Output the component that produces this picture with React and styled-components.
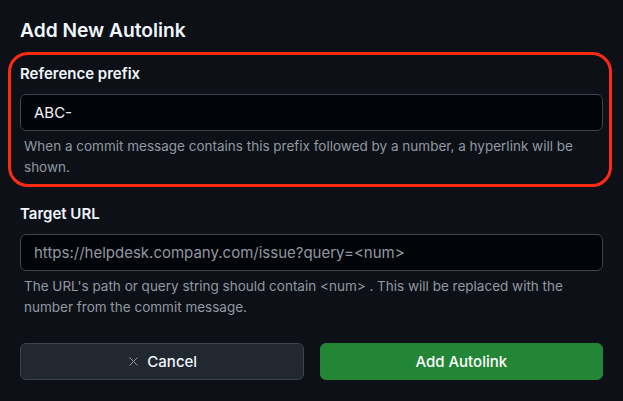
import React from "react";
import styled, { createGlobalStyle } from "styled-components";
import { X } from "lucide-react";

const GlobalStyle = createGlobalStyle`
  body {
    margin: 0;
    background: #0d1117;
    font-family: Inter, "Noto Sans", sans-serif;
    color: #f0f6fc;
  }
`;

const App = () => {
  return (
    <>
      <GlobalStyle />
      <Page>
        <Title>Add New Autolink</Title>

        <Field highlighted>
          <Label htmlFor="prefix">Reference prefix</Label>
          <Input id="prefix" defaultValue="ABC-" />
          <Note>
            When a commit message contains this prefix followed by a number, a
            hyperlink will be shown.
          </Note>
        </Field>

        <Field>
          <Label htmlFor="url">Target URL</Label>
          <Input id="url" placeholder="https://helpdesk.company.com/issue?query=<num>" />
          <Note>
            The URL's path or query string should contain &lt;num&gt; . This will
            be replaced with the number from the commit message.
          </Note>
        </Field>

        <Actions>
          <Button>
            <X size={15} strokeWidth={1.6} color="#9198a1" />
            Cancel
          </Button>
          <Button primary>Add Autolink</Button>
        </Actions>
      </Page>
    </>
  );
};

export default App;

const Page = styled.div`
  padding: 16px 20px 20px;
  display: flex;
  flex-direction: column;
`;

const Title = styled.h2`
  margin: 0 0 20px;
  font-size: 19.2px;
  line-height: 28px;
  font-weight: 600;
`;

const Field = styled.div`
  position: relative;
  display: flex;
  flex-direction: column;
  margin-bottom: 26px;

  &::after {
    content: "";
    display: ${(p) => (p.highlighted ? "block" : "none")};
    position: absolute;
    top: -12px;
    left: -12px;
    right: -9px;
    bottom: -9px;
    border: 3px solid #ff2a12;
    border-radius: 20px;
    pointer-events: none;
  }
`;

const Label = styled.label`
  font-size: 15px;
  line-height: 20px;
  font-weight: 600;
  margin-bottom: 10px;
`;

const Input = styled.input`
  box-sizing: border-box;
  height: 37px;
  width: 100%;
  padding: 0 13px;
  background: #010409;
  border: 1px solid #3d444d;
  border-radius: 6px;
  color: #f0f6fc;
  font-family: inherit;
  font-size: 15px;
  outline: none;

  &::placeholder {
    color: #9198a1;
  }
`;

const Note = styled.p`
  margin: 5px 0 0;
  padding-left: 4px;
  font-size: 13.5px;
  line-height: 21px;
  color: #9198a1;
`;

const Actions = styled.div`
  display: grid;
  grid-template-columns: 1fr 1fr;
  gap: 16px;
  margin-top: -1px;
`;

const Button = styled.button`
  height: 37px;
  display: flex;
  align-items: center;
  justify-content: center;
  gap: 6px;
  border-radius: 6px;
  font-family: inherit;
  font-size: 15px;
  font-weight: 500;
  color: ${(p) => (p.primary ? "#ffffff" : "#f0f6fc")};
  background: ${(p) => (p.primary ? "#238636" : "#212830")};
  border: 1px solid ${(p) => (p.primary ? "#238636" : "#3d444d")};
`;
